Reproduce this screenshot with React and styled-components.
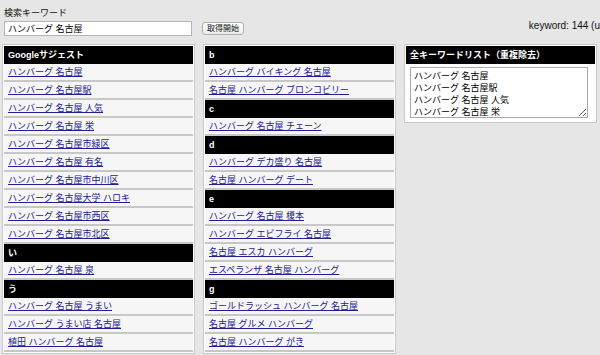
import styled, { createGlobalStyle } from "styled-components";

const GlobalStyle = createGlobalStyle`
  html, body {
    margin: 0;
    padding: 0;
    background: #e6e6e6;
    overflow: hidden;
  }
  body {
    font-family: "Liberation Sans", "Noto Sans CJK JP", sans-serif;
    font-size: 9px;
    color: #000;
  }
`;

const suggestColumns = [
  [
    {
      title: "Googleサジェスト",
      items: [
        "ハンバーグ 名古屋",
        "ハンバーグ 名古屋駅",
        "ハンバーグ 名古屋 人気",
        "ハンバーグ 名古屋 栄",
        "ハンバーグ 名古屋市緑区",
        "ハンバーグ 名古屋 有名",
        "ハンバーグ 名古屋市中川区",
        "ハンバーグ 名古屋大学 ハロキ",
        "ハンバーグ 名古屋市西区",
        "ハンバーグ 名古屋市北区",
      ],
    },
    { title: "い", items: ["ハンバーグ 名古屋 泉"] },
    {
      title: "う",
      items: [
        "ハンバーグ 名古屋 うまい",
        "ハンバーグ うまい店 名古屋",
        "植田 ハンバーグ 名古屋",
      ],
    },
  ],
  [
    {
      title: "b",
      items: ["ハンバーグ バイキング 名古屋", "名古屋 ハンバーグ ブロンコビリー"],
    },
    { title: "c", items: ["ハンバーグ 名古屋 チェーン"] },
    { title: "d", items: ["ハンバーグ デカ盛り 名古屋", "名古屋 ハンバーグ デート"] },
    {
      title: "e",
      items: [
        "ハンバーグ 名古屋 榎本",
        "ハンバーグ エビフライ 名古屋",
        "名古屋 エスカ ハンバーグ",
        "エスペランザ 名古屋 ハンバーグ",
      ],
    },
    {
      title: "g",
      items: [
        "ゴールドラッシュ ハンバーグ 名古屋",
        "名古屋 グルメ ハンバーグ",
        "名古屋 ハンバーグ がき",
      ],
    },
  ],
];

const allKeywords = [
  "ハンバーグ 名古屋",
  "ハンバーグ 名古屋駅",
  "ハンバーグ 名古屋 人気",
  "ハンバーグ 名古屋 栄",
  "ハンバーグ 名古屋市緑区",
  "ハンバーグ 名古屋 有名",
  "ハンバーグ 名古屋市中川区",
].join("\n");

function App() {
  return (
    <Page>
      <GlobalStyle />
      <SearchBar>
        <Field>
          <Label>検索キーワード</Label>
          <KeywordInput defaultValue="ハンバーグ 名古屋" />
        </Field>
        <FetchButton>取得開始</FetchButton>
        <Count>keyword: 144 (u</Count>
      </SearchBar>

      <Columns>
        {suggestColumns.map((groups, i) => (
          <Panel key={i}>
            {groups.map((group) => (
              <div key={group.title}>
                <Heading>{group.title}</Heading>
                {group.items.map((item) => (
                  <Row key={item}>
                    <a href="#">{item}</a>
                  </Row>
                ))}
              </div>
            ))}
          </Panel>
        ))}

        <Panel $short>
          <Heading>全キーワードリスト（重複除去）</Heading>
          <KeywordList readOnly value={allKeywords} />
        </Panel>
      </Columns>
    </Page>
  );
}

const Page = styled.div`
  padding-top: 8px;
`;

const SearchBar = styled.div`
  display: flex;
  align-items: flex-end;
  padding-left: 4px;
  white-space: nowrap;
`;

const Field = styled.div`
  display: flex;
  flex-direction: column;
  gap: 2px;
`;

const Label = styled.label`
  font-size: 9px;
  line-height: 11px;
  color: #111;
`;

const KeywordInput = styled.input`
  box-sizing: border-box;
  width: 188px;
  height: 15px;
  margin: 0;
  padding: 0 3px;
  border: 1px solid #b5b5b5;
  background: #fff;
  font-family: inherit;
  font-size: 9px;
  color: #000;
  outline: none;
`;

const FetchButton = styled.button`
  box-sizing: border-box;
  width: 42px;
  height: 13px;
  margin: 0 0 1px 10px;
  padding: 0;
  border: 1px solid #b0b0b0;
  border-radius: 3px;
  background: linear-gradient(#ffffff, #ececec);
  font-family: inherit;
  font-size: 8px;
  line-height: 11px;
  color: #111;
`;

const Count = styled.span`
  margin: 0 0 5px auto;
  padding-right: 0;
  font-size: 10px;
  color: #111;
`;

const Columns = styled.div`
  display: flex;
  align-items: flex-start;
  gap: 8px;
  margin-top: 8px;
  padding-left: 2px;
`;

const Panel = styled.div`
  box-sizing: border-box;
  width: 193px;
  padding: 1px 1px ${({ $short }) => ($short ? "4px" : "1px")};
  border: 1px solid #c9c9c9;
  background: #fff;
`;

const Heading = styled.div`
  height: 18px;
  line-height: 18px;
  padding-left: 4px;
  background: #000;
  color: #fff;
  font-weight: bold;
  font-size: 9px;
`;

const Row = styled.div`
  height: 16px;
  line-height: 16px;
  padding-left: 4px;
  background: #f6f6f6;
  border-bottom: 2px solid #c7c7c7;

  a {
    color: #23208f;
    text-decoration: underline;
    font-size: 9px;
  }
`;

const KeywordList = styled.textarea`
  display: block;
  box-sizing: border-box;
  width: 178px;
  height: 51px;
  margin: 3px 0 0 4px;
  padding: 2px 3px;
  border: 1px solid #a9a9a9;
  font-family: inherit;
  font-size: 9px;
  line-height: 12px;
  color: #000;
  resize: vertical;
  overflow: hidden;
  outline: none;
`;

export default App;
